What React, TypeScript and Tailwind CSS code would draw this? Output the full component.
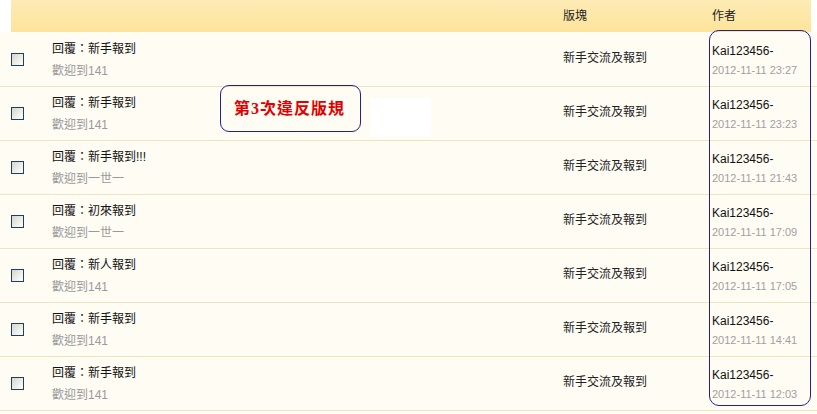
import React from "react";

const rows = [
  { t: "回覆：新手報到", s: "歡迎到141", d: "2012-11-11 23:27" },
  { t: "回覆：新手報到", s: "歡迎到141", d: "2012-11-11 23:23" },
  { t: "回覆：新手報到!!!", s: "歡迎到一世一", d: "2012-11-11 21:43" },
  { t: "回覆：初來報到", s: "歡迎到一世一", d: "2012-11-11 17:09" },
  { t: "回覆：新人報到", s: "歡迎到141", d: "2012-11-11 17:05" },
  { t: "回覆：新手報到", s: "歡迎到141", d: "2012-11-11 14:41" },
  { t: "回覆：新手報到", s: "歡迎到141", d: "2012-11-11 12:03" },
];

export default function App() {
  return (
    <div
      className="relative w-[817px] h-[414px] overflow-hidden bg-[#fffcf4] text-[12px]"
      style={{ fontFamily: '"Liberation Sans", "Noto Sans CJK TC", sans-serif' }}
    >
      <div className="bg-white h-8">
        <div className="ml-[11px] w-[800px] h-8 flex items-center bg-gradient-to-b from-[#fdebb4] to-[#fde49c] text-[#222]">
          <div className="w-[552px]" />
          <div className="w-[149px]">版塊</div>
          <div>作者</div>
        </div>
      </div>
      <div className="h-[1px]" />
      {rows.map((r, i) => (
        <div key={i} className="flex items-center h-[54px] border-b border-[#eee4c2]">
          <div className="ml-[11px] w-[13px] h-[13px] border border-[#1f3f60] bg-gradient-to-br from-[#d6d6ce] to-[#ffffff]" />
          <div className="ml-[28px] w-[511px] flex flex-col">
            <div className="leading-[22px] text-[#111]">{r.t}</div>
            <div className="leading-[22px] text-[#999]">{r.s}</div>
          </div>
          <div className="w-[149px] text-[#222] pb-[3px]">新手交流及報到</div>
          <div className="flex flex-col">
            <div className="leading-[20px] text-[#111]">Kai123456-</div>
            <div className="leading-[18px] text-[11px] text-[#a0a0a0]">{r.d}</div>
          </div>
        </div>
      ))}
      <div className="absolute left-[370px] top-[98px] w-[61px] h-[38px] bg-white" />
      <div className="absolute left-[220px] top-[85px] w-[141px] h-[47px] border border-[#22228f] rounded-[9px] flex items-center pl-[13px]">
        <span
          className="text-[#e00000] font-bold text-[16px] tracking-[1px]"
          style={{ fontFamily: '"Liberation Serif", "Noto Sans CJK TC", serif' }}
        >
          第3次違反版規
        </span>
      </div>
      <div className="absolute left-[709px] top-[30px] w-[102px] h-[376px] border border-[#22228f] rounded-[10px]" />
    </div>
  );
}
